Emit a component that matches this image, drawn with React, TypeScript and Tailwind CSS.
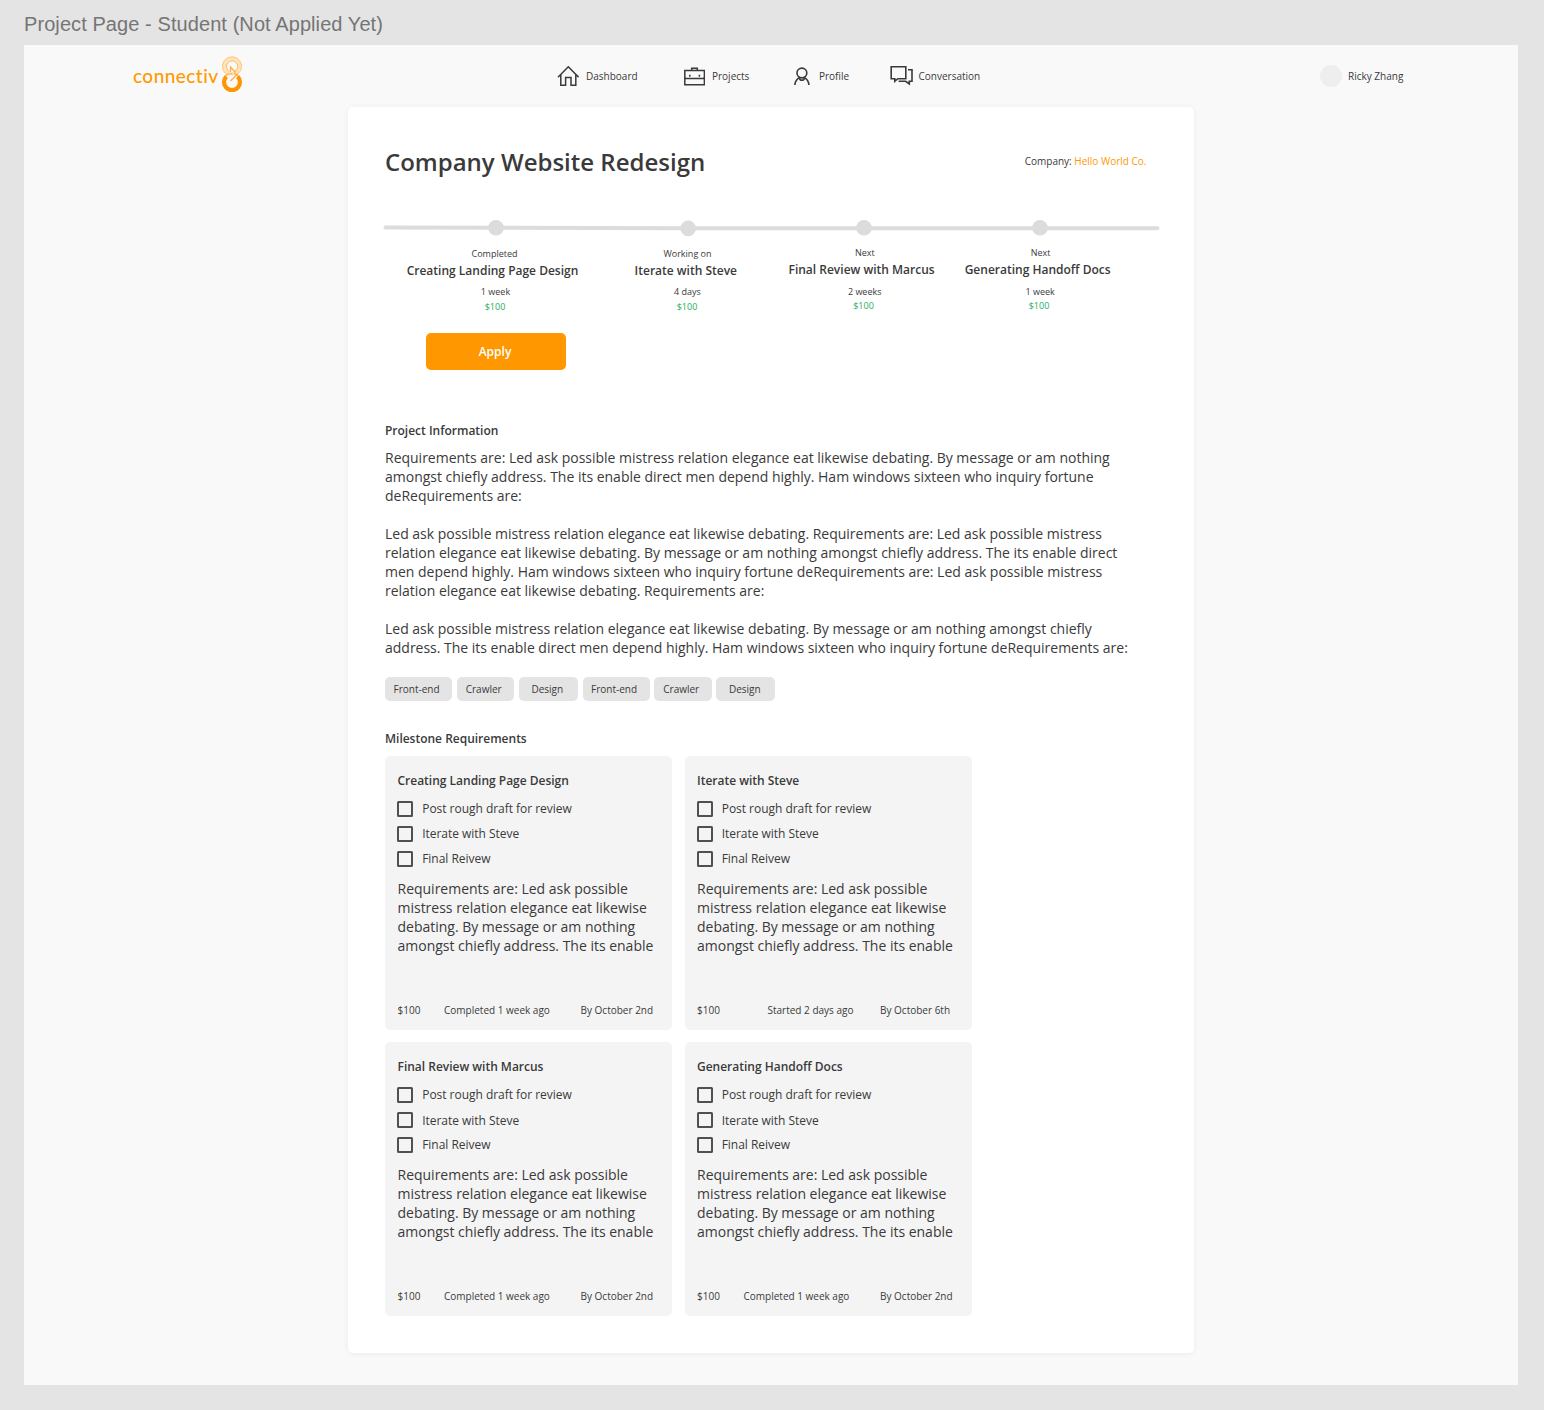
const steps = [
  { status: "Completed", title: "Creating Landing Page Design", time: "1 week", box: "w-[188px] pt-px", statusShift: "-translate-x-[0.5px]", shift: "-translate-x-[2.5px]", timeShift: "mt-[5px] translate-x-[0.5px]", price: "-mt-px" },
  { status: "Working on", title: "Iterate with Steve", time: "4 days", box: "w-[196px] pt-px", statusShift: "translate-x-[0.5px]", shift: "-translate-x-[1.2px]", timeShift: "mt-[5px] translate-x-[0.3px]", price: "-mt-px" },
  { status: "Next", title: "Final Review with Marcus", time: "2 weeks", box: "w-[158px]", statusShift: "translate-x-[0.8px]", shift: "-translate-x-[2.4px]", timeShift: "mt-[6px] translate-x-[0.7px]", price: "-mt-0.5 -translate-x-[0.5px]" },
  { status: "Next", title: "Generating Handoff Docs", time: "1 week", box: "w-[192px]", statusShift: "translate-x-[1.5px]", shift: "-translate-x-[1.4px]", timeShift: "mt-[6px] translate-x-[1.2px]", price: "-mt-0.5" },
];

const tags = [
  { label: "Front-end", box: "w-[67px] pl-[8.5px]" },
  { label: "Crawler", box: "w-[57.5px] pl-[9px]" },
  { label: "Design", box: "w-[59px] pl-[12.5px]" },
  { label: "Front-end", box: "w-[67px] pl-[8.5px]" },
  { label: "Crawler", box: "w-[57.5px] pl-[9px]" },
  { label: "Design", box: "w-[59px] pl-[12.5px]" },
];

const milestones = [
  { title: "Creating Landing Page Design", note: "Completed 1 week ago", due: "By October 2nd", noteBox: "pl-[59.5px]", secondTask: "" },
  { title: "Iterate with Steve", note: "Started 2 days ago", due: "By October 6th", noteBox: "pl-[83.5px]", secondTask: "" },
  { title: "Final Review with Marcus", note: "Completed 1 week ago", due: "By October 2nd", noteBox: "pl-[59.5px]", secondTask: "mt-0.5" },
  { title: "Generating Handoff Docs", note: "Completed 1 week ago", due: "By October 2nd", noteBox: "pl-[59.5px]", secondTask: "mt-0.5" },
];

const tasks = ["Post rough draft for review", "Iterate with Steve", "Final Reivew"];

function Logo() {
  return (
    <div className="flex h-[36px] w-[110px] items-center">
      <span className="w-[88px] whitespace-nowrap font-['Lato'] text-[19px] font-medium leading-[24px] tracking-[0.45px] text-[#ff9900]">connectiv</span>
      <svg className="-mt-[5px] h-[36px] w-[22px] shrink-0" viewBox="0 0 22 36" fill="none">
        <circle cx="11" cy="10.3" r="7.6" stroke="#fee3bb" strokeWidth="3.8" />
        <path d="M6.6 18.8A9.5 9.5 0 1 1 15.4 18.8" stroke="#fdc067" strokeWidth="0.9" />
        <path d="M8.4 15.3A5.6 5.6 0 1 1 14 15.2" stroke="#fdb95a" strokeWidth="1" />
        <path d="M5.4 20.4A8 8 0 1 0 16.6 20.4" stroke="#ff9500" strokeWidth="4.2" />
        <path d="M4.4 19.8Q7 17.4 11.5 17.8M9.5 15.8V11L14.5 16.5M13 17.2 17.6 20M9.5 25 16.8 17.8" stroke="#fdac3a" strokeWidth="1.2" />
      </svg>
    </div>
  );
}

function HomeIcon() {
  return (
    <svg className="h-[22px] w-[22px]" viewBox="557 65 22 22" fill="none" stroke="#3a3a3a" strokeWidth="1.5">
      <path d="M558 77.2 568.3 66.8 578.6 77.2M560.8 74.8V85.3H565.6V77.4H571V85.3H575.8V74.8" />
    </svg>
  );
}

function BriefcaseIcon() {
  return (
    <svg className="h-[22px] w-[22px]" viewBox="683 65 22 22" fill="none" stroke="#3a3a3a" strokeWidth="1.5">
      <path d="M684.8 70.4H704.4V84.8H684.8ZM691.7 70.4V68.2H697.3V70.4M684.8 77.6 686 78.6H703.2L704.4 77.6M689.8 74.8V76.8M699.4 74.8V76.8" />
    </svg>
  );
}

function ProfileIcon() {
  return (
    <svg className="h-[22px] w-[18px]" viewBox="793 65 18 22" fill="none" stroke="#3a3a3a" strokeWidth="1.6">
      <circle cx="801.9" cy="73" r="4.9" />
      <path d="M794.9 85C795 81.5 796.5 79.4 799.3 77.6C799.7 81.2 804.1 81.2 804.5 77.6C807.3 79.4 808.8 81.5 808.9 85" />
    </svg>
  );
}

function ChatIcon() {
  return (
    <svg className="h-[22px] w-[24px]" viewBox="890 65 24 22" fill="none" stroke="#3a3a3a" strokeWidth="1.6">
      <path d="M891.2 66.8H905.8V78.7H897.8L894.8 81.3V78.7H891.2ZM908 69.8H912V81.3H909.3V84L905.6 81.3H898.6" />
    </svg>
  );
}

function Timeline() {
  return (
    <svg className="block h-[18px] w-[778px]" viewBox="383 219 778 18" fill="#dcdcdc">
      <path d="M385.5 227.4 688 228.3H1157.5" stroke="#dcdcdc" strokeWidth="4" strokeLinecap="round" fill="none" />
      <circle cx="496" cy="227.8" r="7.8" />
      <circle cx="688.2" cy="228.4" r="7.8" />
      <circle cx="864" cy="227.8" r="7.8" />
      <circle cx="1040" cy="227.8" r="7.8" />
    </svg>
  );
}

function MilestoneCard({ item }: { item: (typeof milestones)[number] }) {
  return (
    <section className="flex h-[273.5px] w-[287px] flex-col rounded-[5px] bg-[#f4f4f4] pl-[12.5px]">
      <h3 className="mt-[17px] text-[12px] font-semibold leading-4 tracking-[-0.01px]">{item.title}</h3>
      <ul className="mt-3 flex flex-col gap-[9px] tracking-[-0.03px]">
        {tasks.map((task, i) => (
          <li key={task} className="flex h-4 items-center">
            <span className="-ml-[0.5px] size-4 rounded-[1.5px] border-2 border-[#505050]" />
            <span className={`ml-[9.2px] text-[12px] leading-4 ${i === 1 ? item.secondTask : ""}`}>{task}</span>
          </li>
        ))}
      </ul>
      <p className="mt-3 w-max whitespace-nowrap text-[14px] leading-[19px] tracking-[-0.01px]">
        Requirements are: Led ask possible<br />
        mistress relation elegance eat likewise<br />
        debating. By message or am nothing<br />
        amongst chiefly address. The its enable
      </p>
      <div className="mt-[47px] flex text-[10px] leading-4">
        <span className="-mr-[13px] w-0">$100</span>
        <span className={`w-[196px] whitespace-nowrap ${item.noteBox}`}>{item.note}</span>
        <span className="whitespace-nowrap">{item.due}</span>
      </div>
    </section>
  );
}

export default function App() {
  return (
    <div className="h-[1410px] w-[1544px] overflow-hidden bg-[#e4e4e4] pl-6 font-['Open_Sans',sans-serif] text-[#3a3a3a]">
      <div className="flex h-[45px] items-center font-['Liberation_Sans',sans-serif] text-[20px] leading-6 tracking-[0.08px] text-[#757575]">
        <span className="mt-[3px]">Project Page - Student (Not Applied Yet)</span>
      </div>
      <div className="h-[1340px] w-[1493.5px] bg-[#f9f9f9]">
        <header className="flex h-[62px] items-center pl-[109px] text-[10px] leading-4">
          <Logo />
          <nav className="ml-[314px] flex items-center whitespace-nowrap">
            <a className="flex w-[126px] items-center gap-[7px]"><HomeIcon />Dashboard</a>
            <a className="flex w-[110px] items-center gap-[7px]"><BriefcaseIcon />Projects</a>
            <a className="flex w-[97px] items-center gap-[8px]"><ProfileIcon />Profile</a>
            <a className="flex w-[430px] items-center gap-[4.5px]"><ChatIcon />Conversation</a>
          </nav>
          <div className="flex items-center gap-[6px] whitespace-nowrap">
            <span className="size-[22px] rounded-full bg-[#eeeeee]" />
            Ricky Zhang
          </div>
        </header>

        <main className="ml-[323.5px] h-[1246.4px] w-[846.5px] rounded-[5px] bg-white pl-[37.5px] shadow-[0_1px_6px_rgba(0,0,0,0.06)]">
          <div className="flex h-[112px] items-start justify-between pr-[47.5px] pt-[38px]">
            <h1 className="mt-px text-[24px] font-semibold leading-8">Company Website Redesign</h1>
            <p className="mt-2 text-[10px] leading-4">Company: <a className="text-[#ff9900]">Hello World Co.</a></p>
          </div>
          <div className="-ml-[2px]"><Timeline /></div>
          <ol className="ml-4 flex h-[96px] pt-2">
            {steps.map((s) => (
              <li key={s.title} className={`shrink-0 text-center text-[9px] leading-4 ${s.box}`}>
                <p className={s.statusShift}>{s.status}</p>
                <h2 className={`mt-px text-[12px] font-semibold leading-4 ${s.shift}`}>{s.title}</h2>
                <p className={s.timeShift}>{s.time}</p>
                <p className={`text-[#27ae60] ${s.price}`}>$100</p>
              </li>
            ))}
          </ol>
          <button className="ml-[40.5px] block h-[37px] w-[140px] rounded-[5px] bg-[#ff9800] pr-px text-center text-[12px] font-semibold leading-[37px] text-white">Apply</button>

          <h2 className="mt-[52.5px] text-[12px] font-semibold leading-4 tracking-[-0.01px]">Project Information</h2>
          <div className="mt-[9px] whitespace-nowrap text-[14px] leading-[19px] tracking-[-0.01px]">
            <p>Requirements are: Led ask possible mistress relation elegance eat likewise debating. By message or am nothing<br />
              amongst chiefly address. The its enable direct men depend highly. Ham windows sixteen who inquiry fortune<br />deRequirements are:</p>
            <p className="mt-[19px]">Led ask possible mistress relation elegance eat likewise debating. Requirements are: Led ask possible mistress<br />
              relation elegance eat likewise debating. By message or am nothing amongst chiefly address. The its enable direct<br />
              men depend highly. Ham windows sixteen who inquiry fortune deRequirements are: Led ask possible mistress<br />
              relation elegance eat likewise debating. Requirements are:</p>
            <p className="mt-[19px]">Led ask possible mistress relation elegance eat likewise debating. By message or am nothing amongst chiefly<br />
              address. The its enable direct men depend highly. Ham windows sixteen who inquiry fortune deRequirements are:</p>
          </div>

          <div className="mt-5 flex gap-[4.7px]">
            {tags.map((t, i) => (
              <span key={i} className={`h-[24.5px] shrink-0 rounded-[5px] bg-[#e4e4e4] text-[10px] leading-[24px] ${t.box}`}>{t.label}</span>
            ))}
          </div>

          <h2 className="mt-[30px] text-[12px] font-semibold leading-4 tracking-[-0.01px]">Milestone Requirements</h2>
          <div className="mt-[9px] grid w-max grid-cols-2 gap-x-[12.5px] gap-y-[12.5px]">
            {milestones.map((m) => <MilestoneCard key={m.title} item={m} />)}
          </div>
        </main>
      </div>
    </div>
  );
}
